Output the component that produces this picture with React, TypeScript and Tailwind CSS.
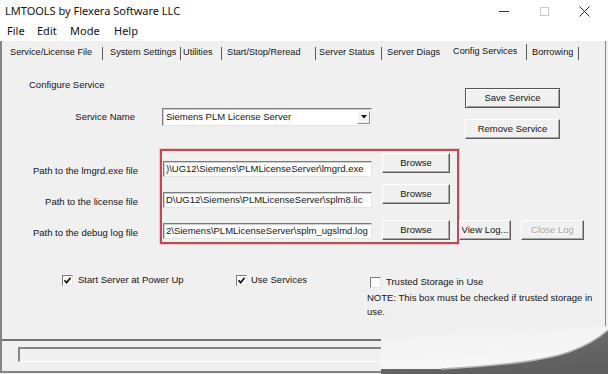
import React from 'react'

const tabs = [
  { label: 'Service/License File', w: 'w-[101px]', pl: 'pl-[8px]' },
  { label: 'System Settings', w: 'w-[78px]', pl: 'pl-[7px]' },
  { label: 'Utilities', w: 'w-[41px]', pl: 'pl-[2px]' },
  { label: 'Start/Stop/Reread', w: 'w-[94px]', pl: 'pl-[5px]' },
  { label: 'Server Status', w: 'w-[66px]', pl: 'pl-[3px]' },
  { label: 'Server Diags', w: 'w-[66px]', pl: 'pl-[5px]', noSep: true },
  { label: 'Config Services', w: 'w-[79px]', pl: 'pl-[5px]', active: true },
  { label: 'Borrowing', w: 'w-[52px]', pl: 'pl-[5px]' },
]

const btn =
  'flex items-center justify-center bg-[#f0f0f0] border border-t-white border-l-white border-r-[#5c5c5c] border-b-[#5c5c5c] shadow-[inset_-1px_-1px_0_#a8a8a8] leading-none'

const field =
  'bg-white border border-t-[#7c7c7c] border-l-[#7c7c7c] border-r-[#e4e4e4] border-b-[#e4e4e4] shadow-[inset_1px_1px_0_#cfcfcf] overflow-hidden whitespace-nowrap flex items-center pl-[2px] leading-none'

function CheckBox({ checked }: { checked?: boolean }) {
  return (
    <span className="w-[11px] h-[11px] shrink-0 bg-white border border-t-[#7a7a7a] border-l-[#7a7a7a] border-r-[#e6e6e6] border-b-[#e6e6e6] flex items-center justify-center">
      {checked && (
        <svg width="9" height="9" viewBox="0 0 9 9">
          <path d="M1.5 4.2 L3.6 6.6 L7.6 1.8" fill="none" stroke="#111" strokeWidth="1.7" />
        </svg>
      )}
    </span>
  )
}

export default function App() {
  const rows = [
    { label: 'Path to the lmgrd.exe file', path: ')\\UG12\\Siemens\\PLMLicenseServer\\lmgrd.exe', bt: 'mt-[2px]', h: 'h-[31px]' },
    { label: 'Path to the license file', path: 'D\\UG12\\Siemens\\PLMLicenseServer\\splm8.lic', bt: 'mt-[2px]', h: 'h-[31px]' },
    { label: 'Path to the debug log file', path: '2\\Siemens\\PLMLicenseServer\\splm_ugslmd.log', bt: 'mt-[7px]', h: 'h-[29px]' },
  ]

  return (
    <div className="relative w-[608px] h-[374px] overflow-hidden bg-[#f0f0f0] text-[#141414] font-['Liberation_Sans',Arial,sans-serif] text-[9.5px]">
      {/* title bar */}
      <div className="h-[22px] bg-white flex items-center">
        <span className="pl-[5px] font-['Noto_Sans',sans-serif] text-[11px] text-[#111]">LMTOOLS by Flexera Software LLC</span>
        <div className="ml-auto mr-[4px] flex">
          <div className="w-[40px] h-[22px] flex items-center justify-center">
            <span className="w-[10px] h-px bg-[#333]" />
          </div>
          <div className="w-[40px] h-[22px] flex items-center justify-center">
            <span className="w-[9px] h-[9px] border border-[#c8c8c8]" />
          </div>
          <div className="w-[40px] h-[22px] flex items-center justify-center">
            <svg width="11" height="11" viewBox="0 0 11 11">
              <path d="M0.5 0.5 L10.5 10.5 M10.5 0.5 L0.5 10.5" stroke="#222" strokeWidth="1" />
            </svg>
          </div>
        </div>
      </div>

      {/* menu */}
      <div className="h-[19px] bg-white flex items-center pl-[7px] font-['Noto_Sans',sans-serif] text-[11px] text-[#111]">
        <span className="w-[30px]">File</span>
        <span className="w-[33px]">Edit</span>
        <span className="w-[44px]">Mode</span>
        <span>Help</span>
      </div>

      <div className="flex flex-col border-l-2 border-l-[#858585] border-r border-r-[#858585] border-b-2 border-b-[#858585] mr-[2px]">
        {/* tabs */}
        <div className="h-[20px] flex items-center pt-[4px] text-[9.2px]">
          {tabs.map((t) => (
            <div key={t.label} className={`${t.w} ${t.pl} shrink-0 flex items-center h-[14px]`}>
              <span className={`whitespace-nowrap overflow-hidden ${t.active ? '-mt-[3px]' : ''}`}>{t.label}</span>
              {!t.noSep && (
                <span className={`ml-auto w-px shrink-0 bg-[#5a5a5a] ${t.active ? 'h-[16px] -mt-[3px]' : 'h-[13px]'}`} />
              )}
            </div>
          ))}
        </div>

        {/* panel */}
        <div className="h-[280px] border-b-2 border-b-[#727272] flex flex-col">
          <div className="flex">
            <div className="w-[370px] flex flex-col">
              <div className="pl-[27px] mt-[18px] leading-[12px] h-[12px]">Configure Service</div>
              <div className="mt-[17px] h-[18px] flex items-center">
                <span className="w-[133px] text-right">Service Name</span>
                <div className={`${field} ml-[27px] w-[210px] h-[18px]`}>
                  <span className="pl-[1px]">Siemens PLM License Server</span>
                  <span className="ml-auto mr-[1px] w-[13px] h-[13px] bg-[#f4f4f4] border border-t-white border-l-white border-r-[#8a8a8a] border-b-[#8a8a8a] flex items-center justify-center">
                    <svg width="6" height="4" viewBox="0 0 6 4">
                      <path d="M0 0 H6 L3 3.5 Z" fill="#111" />
                    </svg>
                  </span>
                </div>
              </div>
            </div>
            <div className="ml-[93px] mt-[27px] flex flex-col">
              <div className="w-[95px] h-[20px] flex items-center justify-center bg-[#f0f0f0] border border-[#555] shadow-[inset_1px_1px_0_#fff,inset_-1px_-1px_0_#a0a0a0]">
                Save Service
              </div>
              <div className={`${btn} mt-[11px] w-[95px] h-[20px]`}>Remove Service</div>
            </div>
          </div>

          {/* paths */}
          <div className="mt-[10px] flex items-start">
            <div className="w-[136px] pt-[16px] flex flex-col items-end gap-[19px]">
              {rows.map((r) => (
                <span key={r.label} className="leading-[12px] h-[12px] whitespace-nowrap">{r.label}</span>
              ))}
            </div>
            <div className="ml-[22px] w-[299px] border-2 border-[#bd4a52] shadow-[0_0_0_1px_#f0caca] flex flex-col">
              {rows.map((r) => (
                <div key={r.path} className={`${r.h} flex items-start`}>
                  <div className={`${field} ml-[1px] mt-[10px] w-[209px] h-[16px]`}>{r.path}</div>
                  <div className={`${btn} ml-[10px] ${r.bt} w-[68px] h-[20px]`}>Browse</div>
                </div>
              ))}
            </div>
            <div className="mt-[71px] flex">
              <div className={`${btn} w-[52px] h-[20px]`}>View Log...</div>
              <div className={`${btn} ml-[10px] w-[63px] h-[20px] text-[#a3a3a3] [text-shadow:1px_1px_0_#fff]`}>Close Log</div>
            </div>
          </div>

          {/* checkboxes */}
          <div className="mt-[30px] flex items-start">
            <div className="ml-[60px] w-[174px] h-[12px] flex items-center">
              <CheckBox checked />
              <span className="ml-[5px] whitespace-nowrap">Start Server at Power Up</span>
            </div>
            <div className="w-[131px] h-[12px] flex items-center">
              <CheckBox checked />
              <span className="ml-[4px] whitespace-nowrap">Use Services</span>
            </div>
            <div className="mt-[2px] flex flex-col">
              <div className="h-[12px] flex items-center">
                <span className="ml-[3px]" />
                <CheckBox />
                <span className="ml-[5px] whitespace-nowrap">Trusted Storage in Use</span>
              </div>
              <div className="mt-[3px] leading-[14px] whitespace-nowrap">
                NOTE: This box must be checked if trusted storage in
                <br />
                use.
              </div>
            </div>
          </div>
        </div>

        {/* status bar */}
        <div className="h-[30px]">
          <div className="ml-[16px] mt-[6px] h-[15px] w-[580px] border-t-2 border-l-2 border-[#858585] border-r border-b border-r-white border-b-white" />
        </div>
      </div>

      {/* page curl of the photo */}
      <svg className="absolute left-[381px] top-[316px]" width="227" height="58" viewBox="0 0 227 58">
        <defs>
          <linearGradient id="lite" x1="0" y1="0" x2="0.3" y2="1">
            <stop offset="0" stopColor="#f0f0f0" />
            <stop offset="1" stopColor="#f7f7f7" />
          </linearGradient>
          <linearGradient id="dark" x1="0" y1="0" x2="0.6" y2="1">
            <stop offset="0" stopColor="#8a8a8a" />
            <stop offset="0.4" stopColor="#6c6c6c" />
            <stop offset="1" stopColor="#5e5e5e" />
          </linearGradient>
        </defs>
        <path d="M0 22 L227 10 L227 14 C218 22 205 30 188 36 C165 44 120 50 60 53 L0 53 Z" fill="url(#lite)" />
        <path d="M0 53 L60 53 C120 50 165 44 188 36 C205 30 218 22 227 14 L227 58 L0 58 Z" fill="url(#dark)" />
        <path d="M60 53 C120 50 165 44 188 36 C205 30 218 22 227 14" fill="none" stroke="#b5b5b5" strokeWidth="1.5" />
      </svg>
    </div>
  )
}
